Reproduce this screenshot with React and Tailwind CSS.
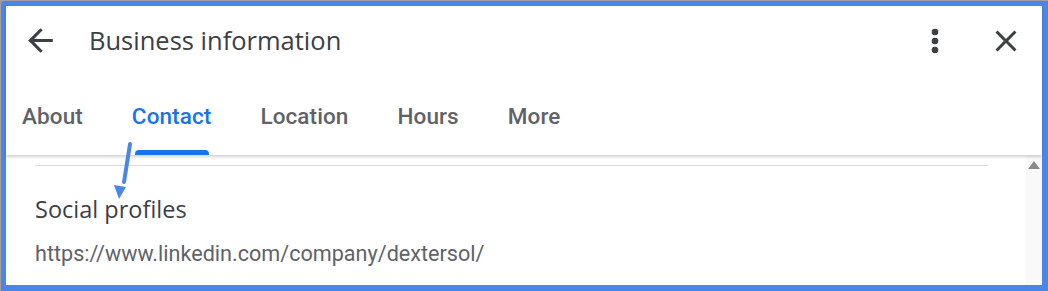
import React from "react";

export default function App() {
  const tabs = ["About", "Contact", "Location", "Hours", "More"];
  const gs = { fontFamily: "'Open Sans', Roboto, sans-serif" };
  return (
    <div className="w-[1048px] h-[291px] bg-[#a0a0a0] pt-[1px] pl-[1px] overflow-hidden" style={{ fontFamily: "Roboto, 'Noto Sans', sans-serif" }}>
      <div className="relative w-full h-full border-t-[5px] border-l-[5px] border-r-[6px] border-b-[6px] border-[#4a86e8] rounded-tl-[3px] bg-white flex flex-col">
        {/* Header */}
        <div className="relative z-10 h-[149px] shrink-0 bg-white shadow-[0_2px_3px_rgba(0,0,0,0.18)] flex flex-col">
          <div className="h-[69px] flex items-center pl-[16px] pr-[18px]">
            <svg width="37" height="37" viewBox="0 0 24 24" className="text-[#3c4043]">
              <path d="M20 11H7.83l5.59-5.59L12 4l-8 8 8 8 1.41-1.41L7.83 13H20v-2z" fill="currentColor" />
            </svg>
            <div className="ml-[30px] text-[25.5px] text-[#3c4043]" style={gs}>Business information</div>
            <div className="flex-1" />
            <svg width="8" height="26" viewBox="0 0 8 26" className="text-[#3c4043] mr-[49px]">
              <circle cx="4" cy="4" r="3.3" fill="currentColor" />
              <circle cx="4" cy="13" r="3.3" fill="currentColor" />
              <circle cx="4" cy="22" r="3.3" fill="currentColor" />
            </svg>
            <svg width="36" height="36" viewBox="0 0 24 24" className="text-[#3c4043]">
              <path d="M19 6.41 17.59 5 12 10.59 6.41 5 5 6.41 10.59 12 5 17.59 6.41 19 12 13.41 17.59 19 19 17.59 13.41 12z" fill="currentColor" />
            </svg>
          </div>
          <div className="flex-1 flex items-stretch pl-[16px] gap-[49px]">
            {tabs.map((t, i) => (
              <div key={t} className="relative flex flex-col items-center">
                <div className={`flex-1 flex items-center pt-[3px] text-[22.5px] tracking-[0.1px] font-medium ${i === 1 ? "text-[#1a73e8]" : "text-[#5f6368]"}`}>{t}</div>
                {i === 1 && <div className="absolute bottom-0 left-[3px] right-[2px] h-[5px] bg-[#1a73e8] rounded-t-[4px]" />}
              </div>
            ))}
          </div>
        </div>
        {/* Body */}
        <div className="flex-1 flex min-h-0">
          <div className="flex-1 pl-[29px] pr-[38px]">
            <div className="mt-[10px] h-[1px] bg-[#dadce0]" />
            <div className="mt-[26px] text-[23.5px] text-[#3c4043]" style={gs}>Social profiles</div>
            <div className="mt-[11px] text-[21.6px] text-[#5f6368]">https://www.linkedin.com/company/dextersol/</div>
          </div>
          <div className="w-[16px] bg-[#f9f9f9] flex justify-center pt-[6px]">
            <div className="w-0 h-0 border-l-[6px] border-r-[6px] border-b-[8px] border-l-transparent border-r-transparent border-b-[#8a8a8a]" />
          </div>
        </div>
        {/* Annotation arrow */}
        <svg className="absolute left-[100px] top-[130px] z-20" width="40" height="70" viewBox="0 0 40 70">
          <line x1="24" y1="8" x2="18" y2="46" stroke="#4a86e8" strokeWidth="4" strokeLinecap="round" />
          <polygon points="8,49 20,51 13,63" fill="#4a86e8" />
        </svg>
      </div>
    </div>
  );
}
